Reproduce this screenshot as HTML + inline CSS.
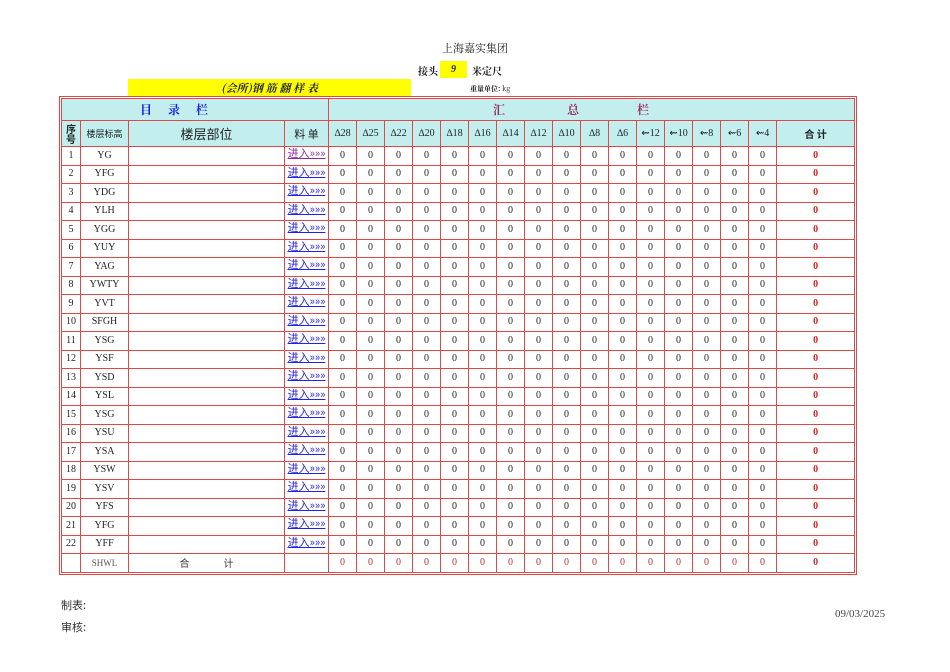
<!DOCTYPE html>
<html><head><meta charset="utf-8"><style>
body{margin:0;width:950px;height:672px;background:#fff;position:relative;font-family:"Liberation Serif","Noto Serif CJK SC",serif;color:#222;overflow:hidden}
.a{position:absolute;white-space:nowrap}
.wrap{position:absolute;left:59px;top:96px;border:1px solid #e04848;padding:1px}
table{border-collapse:collapse;table-layout:fixed;width:793px}
td{border:1px solid #e04848;text-align:center;vertical-align:middle;font-size:10px;padding:0;height:17.5px;line-height:12px;overflow:hidden;white-space:nowrap}
.h td{background:#c2eeee}
.lk{color:#2222ee;font-family:"Noto Sans CJK SC",sans-serif;font-size:11px;line-height:11px}
.lk span{display:inline-block;text-decoration:underline;line-height:11px;height:13px;position:relative;top:-1px}
.v{color:#8a2aa0}
.r{color:#e02020;font-weight:bold}
.t td{color:#c03030}
.cj{font-family:"Noto Sans CJK SC",sans-serif}
</style></head><body>
<div class="a cj" style="left:442px;top:40px;font-size:11px;font-family:'Noto Serif CJK SC',serif">上海嘉实集团</div>
<div class="a" style="left:418px;top:63px;font-size:10px;font-weight:bold;font-family:'Noto Serif CJK SC',serif">接头</div>
<div class="a" style="left:440px;top:61px;width:27px;height:17px;background:#ffff00;font-size:10px;font-weight:bold;font-style:italic;text-align:center;line-height:17px">9</div>
<div class="a" style="left:472px;top:63px;font-size:10px;font-weight:bold;font-family:'Noto Serif CJK SC',serif">米定尺</div>
<div class="a" style="left:128px;top:79px;width:283px;height:18px;background:#ffff00;text-align:center;font-size:11px;font-weight:bold;font-style:italic;line-height:18px;font-family:'Noto Serif CJK SC',serif">(会所)钢 筋 翻 样 表</div>
<div class="a" style="left:470px;top:84px;font-size:7px;font-weight:bold;font-family:'Noto Serif CJK SC',serif">重量单位: <span style="font-weight:normal">kg</span></div>
<div class="wrap"><table>
<colgroup><col style="width:19px"><col style="width:48px"><col style="width:156px"><col style="width:44px"><col span="16" style="width:28px"><col style="width:78px"></colgroup>
<tr class="h"><td colspan="4" style="height:21px;color:#1a1aee;font-weight:bold;font-size:12px;font-family:'Noto Serif CJK SC',serif;text-align:left;padding-left:78px">目<span style="padding-left:16px">录</span><span style="padding-left:16px">栏</span></td><td colspan="17" style="color:#9a2a6a;font-weight:bold;font-size:12px;font-family:'Noto Serif CJK SC',serif;text-align:left;padding-left:164px">汇<span style="padding-left:62px">总</span><span style="padding-left:58px">栏</span></td></tr>
<tr class="h"><td class="cj" style="height:25px;font-size:10px;line-height:10px;font-weight:bold">序<br>号</td><td class="cj" style="font-size:9px">楼层标高</td><td class="cj" style="font-size:13px">楼层部位</td><td class="cj" style="font-size:11px">料 单</td>
<td>∆28</td><td>∆25</td><td>∆22</td><td>∆20</td><td>∆18</td><td>∆16</td><td>∆14</td><td>∆12</td><td>∆10</td><td>∆8</td><td>∆6</td><td>⇜12</td><td>⇜10</td><td>⇜8</td><td>⇜6</td><td>⇜4</td><td class="cj" style="font-size:10px;font-weight:bold">合 计</td></tr>
<tr><td>1</td><td>YG</td><td></td><td class="lk v"><span>进入»»»</span></td><td>0</td><td>0</td><td>0</td><td>0</td><td>0</td><td>0</td><td>0</td><td>0</td><td>0</td><td>0</td><td>0</td><td>0</td><td>0</td><td>0</td><td>0</td><td>0</td><td class="r">0</td></tr>
<tr><td>2</td><td>YFG</td><td></td><td class="lk"><span>进入»»»</span></td><td>0</td><td>0</td><td>0</td><td>0</td><td>0</td><td>0</td><td>0</td><td>0</td><td>0</td><td>0</td><td>0</td><td>0</td><td>0</td><td>0</td><td>0</td><td>0</td><td class="r">0</td></tr>
<tr><td>3</td><td>YDG</td><td></td><td class="lk"><span>进入»»»</span></td><td>0</td><td>0</td><td>0</td><td>0</td><td>0</td><td>0</td><td>0</td><td>0</td><td>0</td><td>0</td><td>0</td><td>0</td><td>0</td><td>0</td><td>0</td><td>0</td><td class="r">0</td></tr>
<tr><td>4</td><td>YLH</td><td></td><td class="lk"><span>进入»»»</span></td><td>0</td><td>0</td><td>0</td><td>0</td><td>0</td><td>0</td><td>0</td><td>0</td><td>0</td><td>0</td><td>0</td><td>0</td><td>0</td><td>0</td><td>0</td><td>0</td><td class="r">0</td></tr>
<tr><td>5</td><td>YGG</td><td></td><td class="lk"><span>进入»»»</span></td><td>0</td><td>0</td><td>0</td><td>0</td><td>0</td><td>0</td><td>0</td><td>0</td><td>0</td><td>0</td><td>0</td><td>0</td><td>0</td><td>0</td><td>0</td><td>0</td><td class="r">0</td></tr>
<tr><td>6</td><td>YUY</td><td></td><td class="lk"><span>进入»»»</span></td><td>0</td><td>0</td><td>0</td><td>0</td><td>0</td><td>0</td><td>0</td><td>0</td><td>0</td><td>0</td><td>0</td><td>0</td><td>0</td><td>0</td><td>0</td><td>0</td><td class="r">0</td></tr>
<tr><td>7</td><td>YAG</td><td></td><td class="lk"><span>进入»»»</span></td><td>0</td><td>0</td><td>0</td><td>0</td><td>0</td><td>0</td><td>0</td><td>0</td><td>0</td><td>0</td><td>0</td><td>0</td><td>0</td><td>0</td><td>0</td><td>0</td><td class="r">0</td></tr>
<tr><td>8</td><td>YWTY</td><td></td><td class="lk"><span>进入»»»</span></td><td>0</td><td>0</td><td>0</td><td>0</td><td>0</td><td>0</td><td>0</td><td>0</td><td>0</td><td>0</td><td>0</td><td>0</td><td>0</td><td>0</td><td>0</td><td>0</td><td class="r">0</td></tr>
<tr><td>9</td><td>YVT</td><td></td><td class="lk"><span>进入»»»</span></td><td>0</td><td>0</td><td>0</td><td>0</td><td>0</td><td>0</td><td>0</td><td>0</td><td>0</td><td>0</td><td>0</td><td>0</td><td>0</td><td>0</td><td>0</td><td>0</td><td class="r">0</td></tr>
<tr><td>10</td><td>SFGH</td><td></td><td class="lk"><span>进入»»»</span></td><td>0</td><td>0</td><td>0</td><td>0</td><td>0</td><td>0</td><td>0</td><td>0</td><td>0</td><td>0</td><td>0</td><td>0</td><td>0</td><td>0</td><td>0</td><td>0</td><td class="r">0</td></tr>
<tr><td>11</td><td>YSG</td><td></td><td class="lk"><span>进入»»»</span></td><td>0</td><td>0</td><td>0</td><td>0</td><td>0</td><td>0</td><td>0</td><td>0</td><td>0</td><td>0</td><td>0</td><td>0</td><td>0</td><td>0</td><td>0</td><td>0</td><td class="r">0</td></tr>
<tr><td>12</td><td>YSF</td><td></td><td class="lk"><span>进入»»»</span></td><td>0</td><td>0</td><td>0</td><td>0</td><td>0</td><td>0</td><td>0</td><td>0</td><td>0</td><td>0</td><td>0</td><td>0</td><td>0</td><td>0</td><td>0</td><td>0</td><td class="r">0</td></tr>
<tr><td>13</td><td>YSD</td><td></td><td class="lk"><span>进入»»»</span></td><td>0</td><td>0</td><td>0</td><td>0</td><td>0</td><td>0</td><td>0</td><td>0</td><td>0</td><td>0</td><td>0</td><td>0</td><td>0</td><td>0</td><td>0</td><td>0</td><td class="r">0</td></tr>
<tr><td>14</td><td>YSL</td><td></td><td class="lk"><span>进入»»»</span></td><td>0</td><td>0</td><td>0</td><td>0</td><td>0</td><td>0</td><td>0</td><td>0</td><td>0</td><td>0</td><td>0</td><td>0</td><td>0</td><td>0</td><td>0</td><td>0</td><td class="r">0</td></tr>
<tr><td>15</td><td>YSG</td><td></td><td class="lk"><span>进入»»»</span></td><td>0</td><td>0</td><td>0</td><td>0</td><td>0</td><td>0</td><td>0</td><td>0</td><td>0</td><td>0</td><td>0</td><td>0</td><td>0</td><td>0</td><td>0</td><td>0</td><td class="r">0</td></tr>
<tr><td>16</td><td>YSU</td><td></td><td class="lk"><span>进入»»»</span></td><td>0</td><td>0</td><td>0</td><td>0</td><td>0</td><td>0</td><td>0</td><td>0</td><td>0</td><td>0</td><td>0</td><td>0</td><td>0</td><td>0</td><td>0</td><td>0</td><td class="r">0</td></tr>
<tr><td>17</td><td>YSA</td><td></td><td class="lk"><span>进入»»»</span></td><td>0</td><td>0</td><td>0</td><td>0</td><td>0</td><td>0</td><td>0</td><td>0</td><td>0</td><td>0</td><td>0</td><td>0</td><td>0</td><td>0</td><td>0</td><td>0</td><td class="r">0</td></tr>
<tr><td>18</td><td>YSW</td><td></td><td class="lk"><span>进入»»»</span></td><td>0</td><td>0</td><td>0</td><td>0</td><td>0</td><td>0</td><td>0</td><td>0</td><td>0</td><td>0</td><td>0</td><td>0</td><td>0</td><td>0</td><td>0</td><td>0</td><td class="r">0</td></tr>
<tr><td>19</td><td>YSV</td><td></td><td class="lk"><span>进入»»»</span></td><td>0</td><td>0</td><td>0</td><td>0</td><td>0</td><td>0</td><td>0</td><td>0</td><td>0</td><td>0</td><td>0</td><td>0</td><td>0</td><td>0</td><td>0</td><td>0</td><td class="r">0</td></tr>
<tr><td>20</td><td>YFS</td><td></td><td class="lk"><span>进入»»»</span></td><td>0</td><td>0</td><td>0</td><td>0</td><td>0</td><td>0</td><td>0</td><td>0</td><td>0</td><td>0</td><td>0</td><td>0</td><td>0</td><td>0</td><td>0</td><td>0</td><td class="r">0</td></tr>
<tr><td>21</td><td>YFG</td><td></td><td class="lk"><span>进入»»»</span></td><td>0</td><td>0</td><td>0</td><td>0</td><td>0</td><td>0</td><td>0</td><td>0</td><td>0</td><td>0</td><td>0</td><td>0</td><td>0</td><td>0</td><td>0</td><td>0</td><td class="r">0</td></tr>
<tr><td>22</td><td>YFF</td><td></td><td class="lk"><span>进入»»»</span></td><td>0</td><td>0</td><td>0</td><td>0</td><td>0</td><td>0</td><td>0</td><td>0</td><td>0</td><td>0</td><td>0</td><td>0</td><td>0</td><td>0</td><td>0</td><td>0</td><td class="r">0</td></tr>
<tr class="t"><td></td><td style="color:#555;font-size:9px">SHWL</td><td class="cj" style="color:#333">合<span style="padding-left:34px">计</span></td><td></td><td>0</td><td>0</td><td>0</td><td>0</td><td>0</td><td>0</td><td>0</td><td>0</td><td>0</td><td>0</td><td>0</td><td>0</td><td>0</td><td>0</td><td>0</td><td>0</td><td class="r">0</td></tr>
</table></div>
<div class="a cj" style="left:61px;top:597px;font-size:11px;color:#333">制表:</div>
<div class="a cj" style="left:61px;top:619px;font-size:11px;color:#333">审核:</div>
<div class="a" style="left:835px;top:608px;font-size:11px;color:#444">09/03/2025</div>
</body></html>
